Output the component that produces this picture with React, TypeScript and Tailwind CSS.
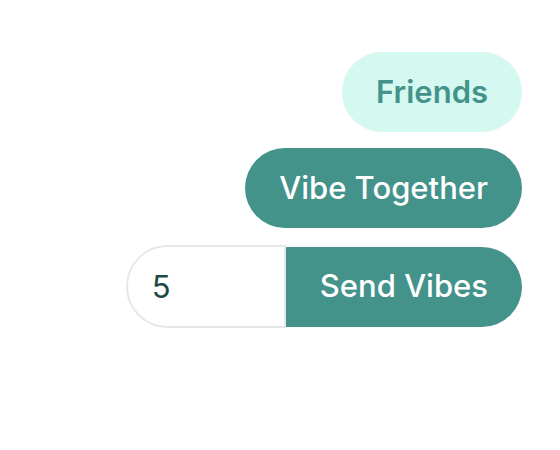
import React, { useState } from 'react';

const font = { fontFamily: 'Inter, "Noto Sans", sans-serif' };

export default function App() {
  const [count, setCount] = useState('5');

  return (
    <div className="min-h-[450px] w-[560px] bg-white" style={font}>
      <div className="flex flex-col items-end gap-4 pr-[38px] pt-[52px]">
        <button className="h-20 rounded-full bg-[#d5f8f0] px-[34px] text-[31px] font-semibold text-[#43938a]">
          Friends
        </button>
        <button className="h-20 rounded-full bg-[#43938a] px-[34px] text-[31px] font-medium text-white">
          Vibe Together
        </button>
        <div className="mt-[1px] flex items-center">
          <input
            value={count}
            onChange={(e) => setCount(e.target.value)}
            className="h-[83px] w-[160px] rounded-l-full border-2 border-[#e5e7eb] bg-white pl-6 text-[31px] text-[#1c4a44] outline-none"
          />
          <button className="h-20 rounded-r-full bg-[#43938a] px-[34px] text-[31px] font-medium text-white">
            Send Vibes
          </button>
        </div>
      </div>
    </div>
  );
}
